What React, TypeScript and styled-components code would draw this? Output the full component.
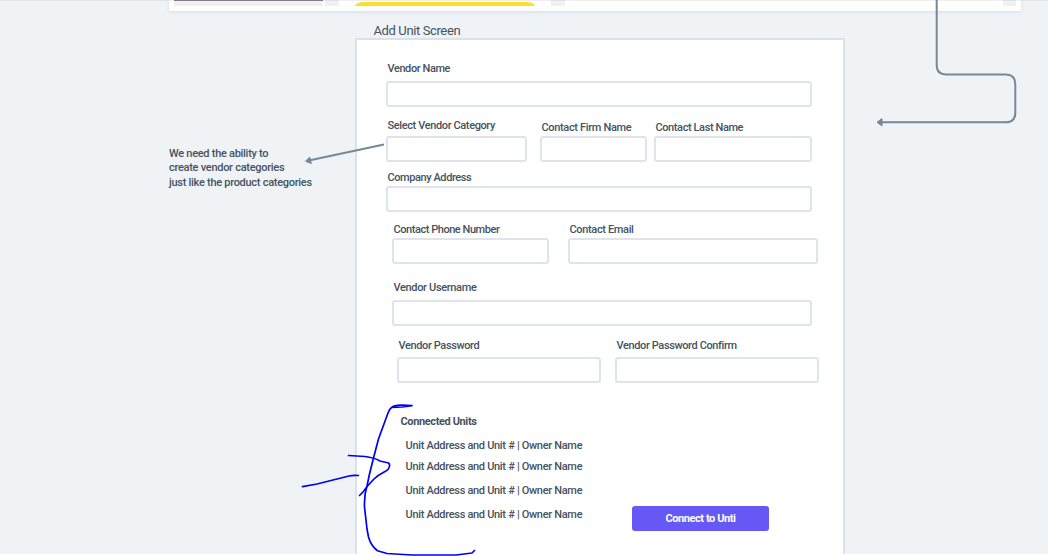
import React from "react";
import styled, { createGlobalStyle } from "styled-components";

const GlobalStyle = createGlobalStyle`
  body {
    margin: 0;
    background: #fff;
    font-family: Roboto, "Liberation Sans", sans-serif;
    color: #46525e;
  }
`;

const Board = styled.main`
  position: relative;
  width: 1048px;
  height: 554px;
  overflow: hidden;
  background: #eff3f6;
`;

const TopEdge = styled.div`
  position: absolute;
  inset: 0 0 auto 0;
  height: 1px;
  background: rgba(120, 125, 130, 0.12);
`;

const UpperScreen = styled.section`
  position: absolute;
  left: 169px;
  top: 0;
  width: 852px;
  height: 11px;
  box-sizing: border-box;
  padding: 0 5px;
  display: flex;
  align-items: flex-start;
  background: #fff;
  box-shadow: 0 1px 3px rgba(90, 110, 130, 0.16);
`;

const Thumb = styled.div`
  width: 149px;
  height: 6px;
  box-sizing: border-box;
  border-top: 1px solid #858084;
  background: #f1eff1;
`;

const Chip = styled.div<{ $gap: number; $w: number }>`
  width: ${(p) => p.$w}px;
  height: 6px;
  margin-left: ${(p) => p.$gap}px;
  background: #f0f1f4;
`;

const YellowPill = styled.div`
  width: 180px;
  height: 4px;
  margin: 2px 0 0 16px;
  border-radius: 9px 9px 0 0 / 4px 4px 0 0;
  background: #ffdd2d;
`;

const ScreenTitle = styled.h1`
  position: absolute;
  left: 373.5px;
  top: 22px;
  margin: 0;
  font-size: 13px;
  line-height: 17px;
  font-weight: 400;
  letter-spacing: -0.38px;
  white-space: nowrap;
`;

const Card = styled.form`
  position: absolute;
  left: 355px;
  top: 38px;
  width: 490px;
  height: 540px;
  box-sizing: border-box;
  padding: 22px 24px 0 29px;
  border: 2px solid #d9e2e9;
  background: #fff;
`;

const Row = styled.div<{ $top?: number; $indent?: number }>`
  display: flex;
  align-items: flex-end;
  margin-top: ${(p) => p.$top ?? 0}px;
  padding-left: ${(p) => p.$indent ?? 0}px;
`;

const Field = styled.label<{ $w: number; $left?: number; $gap: number }>`
  display: flex;
  flex-direction: column;
  gap: ${(p) => p.$gap}px;
  width: ${(p) => p.$w}px;
  margin-left: ${(p) => p.$left ?? 0}px;
`;

const Caption = styled.span<{ $track?: number; $bold?: boolean }>`
  padding-left: 1.5px;
  font-size: 11px;
  line-height: 14px;
  font-weight: ${(p) => (p.$bold ? 700 : 500)};
  letter-spacing: ${(p) => p.$track ?? -0.38}px;
  white-space: nowrap;
`;

const Input = styled.input`
  width: 100%;
  height: 26px;
  box-sizing: border-box;
  padding: 0 8px;
  border: 2px solid #dee4e9;
  border-radius: 3px;
  background: #fff;
  font: inherit;
  outline: none;
`;

const Connected = styled.div`
  display: flex;
  justify-content: space-between;
  align-items: flex-end;
  margin-top: 27px;
  padding: 0 50px 0 13px;
`;

const UnitList = styled.ul`
  margin: 0 0 9px;
  padding: 0 0 0 6.5px;
  list-style: none;
`;

const Unit = styled.li<{ $top: number }>`
  margin-top: ${(p) => p.$top}px;
  font-size: 11px;
  line-height: 14px;
  font-weight: 500;
  letter-spacing: -0.31px;
  white-space: nowrap;
`;

const ConnectButton = styled.button`
  width: 137px;
  height: 25px;
  padding: 0;
  border: 0;
  border-radius: 3px;
  background: #6558f5;
  color: #fff;
  font: 700 11px/25px Roboto, "Liberation Sans", sans-serif;
  letter-spacing: -0.42px;
`;

const Note = styled.p`
  position: absolute;
  left: 169px;
  top: 146.6px;
  margin: 0;
  font-size: 11px;
  line-height: 14.5px;
  font-weight: 500;
  letter-spacing: -0.28px;
  white-space: pre;
`;

const Ink = styled.svg`
  position: absolute;
  left: 0;
  top: 0;
  pointer-events: none;
`;

type FieldProps = { label: string; w: number; left?: number; gap: number; track?: number };

const TextField = ({ label, w, left, gap, track }: FieldProps) => (
  <Field $w={w} $left={left} $gap={gap}>
    <Caption $track={track}>{label}</Caption>
    <Input type="text" />
  </Field>
);

const unitOffsets = [10, 7, 10, 10];

export default function App() {
  return (
    <>
      <GlobalStyle />
      <Board>
        <UpperScreen>
          <Thumb />
          <Chip $gap={2} $w={14} />
          <YellowPill />
          <Chip $gap={16} $w={14} />
          <Chip $gap={438} $w={13} />
        </UpperScreen>
        <TopEdge />
        <ScreenTitle>Add Unit Screen</ScreenTitle>
        <Card>
          <Row>
            <TextField label="Vendor Name" w={426} gap={5} track={-0.42} />
          </Row>
          <Row $top={12}>
            <TextField label="Select Vendor Category" w={141} gap={3} />
            <TextField label="Contact Firm Name" w={107} left={13} gap={1} track={-0.34} />
            <TextField label="Contact Last Name" w={158} left={7} gap={1} track={-0.4} />
          </Row>
          <Row $top={9}>
            <TextField label="Company Address" w={426} gap={1} track={-0.42} />
          </Row>
          <Row $top={11} $indent={6}>
            <TextField label="Contact Phone Number" w={157} gap={1} track={-0.45} />
            <TextField label="Contact Email" w={250} left={19} gap={1} track={-0.35} />
          </Row>
          <Row $top={17} $indent={6}>
            <TextField label="Vendor Username" w={420} gap={5} track={-0.34} />
          </Row>
          <Row $top={13} $indent={11}>
            <TextField label="Vendor Password" w={204} gap={4} />
            <TextField label="Vendor Password Confirm" w={204} left={14} gap={4} />
          </Row>
          <Connected>
            <div>
              <Caption $bold>Connected Units</Caption>
              <UnitList>
                {unitOffsets.map((top, i) => (
                  <Unit key={i} $top={top}>Unit Address and Unit # | Owner Name</Unit>
                ))}
              </UnitList>
            </div>
            <ConnectButton type="button">Connect to Unti</ConnectButton>
          </Connected>
        </Card>
        <Note>{"We need the ability to\ncreate vendor categories\njust like the product categories"}</Note>
      </Board>
      <Ink width="1048" height="556" viewBox="0 0 1048 556" fill="none">
        <g stroke="#778899" strokeWidth="2">
          <path d="M936.700 0V65Q936.700 74.500 946.500 74.500H1006Q1015.300 74.500 1015.300 84V112.500Q1015.300 122.300 1006 122.300H881" />
          <path d="M384 144.500L310 160.300" />
        </g>
        <path d="M877 122.300L882 118.500V126Z" fill="#778899" stroke="#778899" strokeWidth="1" strokeLinejoin="round" />
        <path d="M305.500 161.300L309.700 157L311.300 163.500Z" fill="#778899" stroke="#778899" strokeWidth="1" strokeLinejoin="round" />
        <g stroke="#0000f5" strokeWidth="1.700" strokeLinecap="round" strokeLinejoin="round">
          <path d="M412 405.700L402 405.200Q394 405 391.500 407.500L402 407L412 405.700M391.500 407.500Q389.500 409 388 413L378.500 439L373.500 458L369.500 474L367 486Q364 495 364.500 507L367 529L368.500 537Q371 546 377.500 550.700L387 553.500L412 555L456 555L472 553L474.500 550.500" />
          <path d="M348.500 455.500L365 456.500Q374 457.500 380 461L388.500 463Q391 465 388 469.500C386 472 380 473 374 479L367.500 486L363 492L359.500 495.500" />
          <path d="M302.500 486.700L317 484L349 476Q352 475.200 358.500 475.500" />
        </g>
      </Ink>
    </>
  );
}
